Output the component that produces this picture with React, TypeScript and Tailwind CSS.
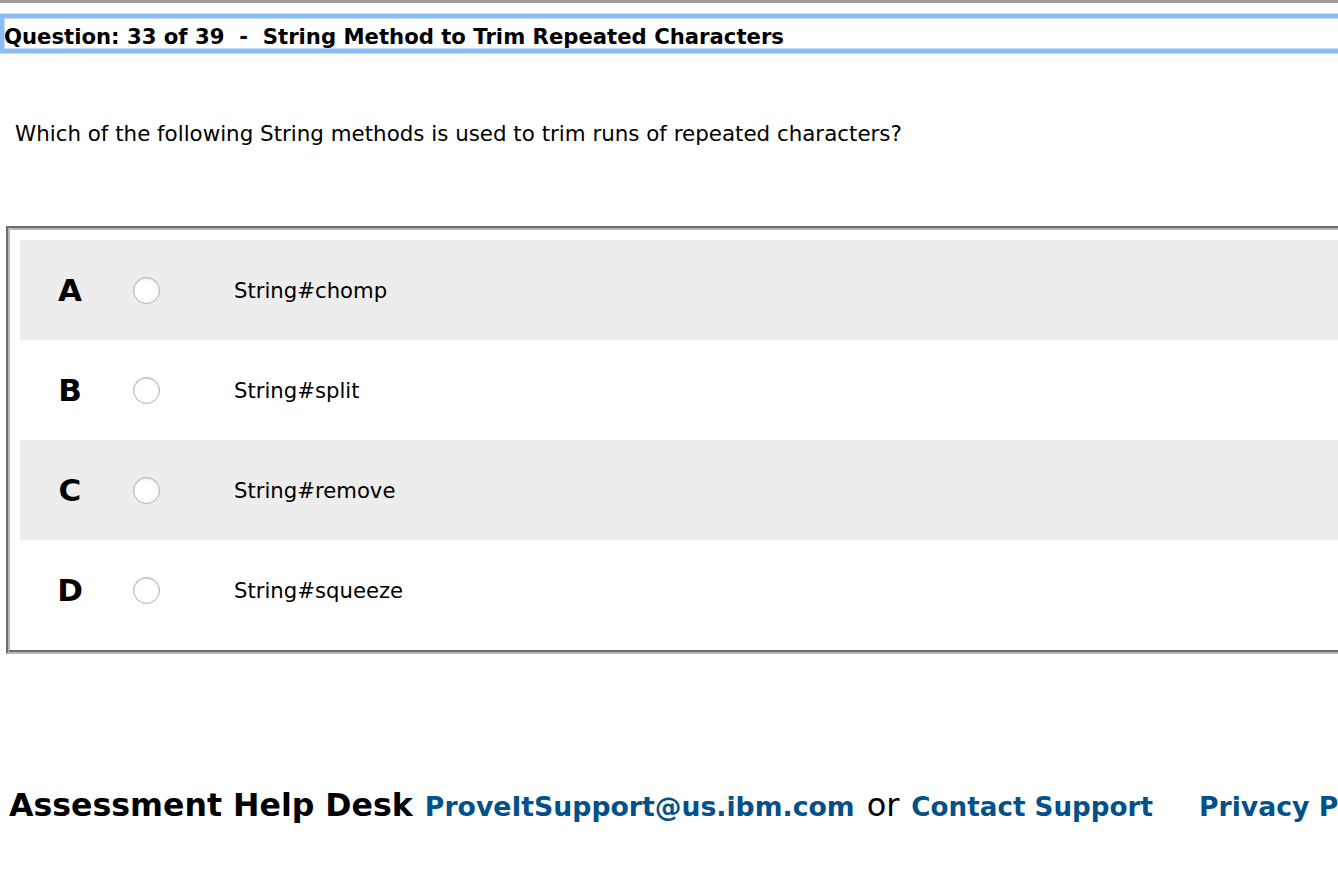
const options = [
  { letter: 'A', label: 'String#chomp' },
  { letter: 'B', label: 'String#split' },
  { letter: 'C', label: 'String#remove' },
  { letter: 'D', label: 'String#squeeze' },
];

export default function App() {
  return (
    <div className="w-[1338px] h-[886px] overflow-hidden bg-white text-black font-['DejaVu_Sans',Verdana,sans-serif]">
      <div className="h-[3px] bg-[#9a9a9a]" />

      {/* Title bar with focus ring */}
      <div className="mt-[11px] w-[1400px] border-[4px] border-[#8cbcf6] outline outline-1 outline-[#c6ddfb] shadow-[inset_0_0_0_1px_#c6ddfb]">
        <div className="h-[31px] flex items-center pt-[7px] text-[21.2px] font-bold whitespace-pre leading-none">
          Question: 33 of 39  -  String Method to Trim Repeated Characters
        </div>
      </div>

      <p className="mt-[70px] pl-[15px] text-[21.4px] leading-none">
        Which of the following String methods is used to trim runs of repeated characters?
      </p>

      {/* Answers */}
      <div className="mt-[82px] ml-[6px] w-[1400px] border-t-2 border-l-2 border-b-2 border-t-[#6e6e6e] border-l-[#6e6e6e] border-b-[#b8b8b8]">
        <div className="border-t-2 border-l-2 border-b-2 border-t-[#b8b8b8] border-l-[#b8b8b8] border-b-[#6e6e6e] pl-[10px] pt-[10px] pb-[10px]">
          {options.map((o, i) => (
            <div
              key={o.letter}
              className={`h-[100px] flex items-center ${i % 2 === 0 ? 'bg-[#ededed]' : 'bg-white'}`}
            >
              <span className="w-[100px] text-center text-[31px] font-bold leading-none">{o.letter}</span>
              <span className="ml-[13px] w-[27px] h-[27px] rounded-full bg-white border border-[#b0b0b0] shadow-[inset_0_1px_2px_rgba(0,0,0,0.15)]" />
              <span className="ml-[74px] text-[21.2px]">{o.label}</span>
            </div>
          ))}
        </div>
      </div>

      {/* Footer */}
      <div className="mt-[127px] pl-[9px] flex items-baseline whitespace-nowrap">
        <span className="text-[31.6px] font-bold">Assessment Help Desk</span>
        <span className="ml-[12px] text-[26.7px] font-bold text-[#03518a]">ProveItSupport@us.ibm.com</span>
        <span className="ml-[12px] text-[32px]">or</span>
        <span className="ml-[12px] text-[26.2px] font-bold text-[#03518a]">Contact Support</span>
        <span className="ml-[46px] text-[26.7px] font-bold text-[#03518a]">Privacy Policy</span>
      </div>
    </div>
  );
}
